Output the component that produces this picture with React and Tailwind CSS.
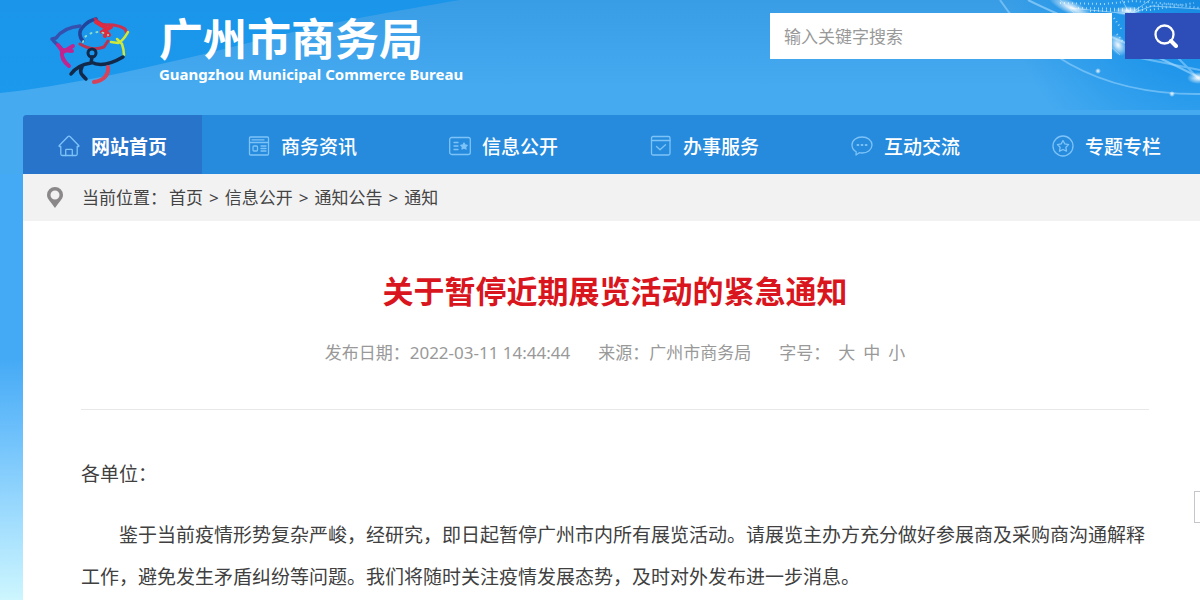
import React, { useState } from 'react';

const iconProps = {
    width: 22, height: 22, viewBox: '0 0 22 22', fill: 'none',
    stroke: 'currentColor', strokeWidth: 1.3, strokeLinecap: 'round', strokeLinejoin: 'round',
    'aria-hidden': true, className: 'shrink-0 text-[#7dc3f8]',
};

const HomeIcon = () => (
    <svg {...iconProps}>
        <path d="M2.800 11.500H1.600c-.6 0-.7-.6-.3-1L9.800 1.700a1.700 1.700 0 0 1 2.400 0l8.500 8.800c.4.4.3 1-.3 1h-1.200V19a1.500 1.500 0 0 1-1.500 1.500H4.300A1.500 1.500 0 0 1 2.800 19z" />
        <path d="M7.700 20.500v-5.300a.8.8 0 0 1 .8-.8h5a.8.8 0 0 1 .8.8v5.300" />
    </svg>
);

const NewsIcon = () => (
    <svg {...iconProps}>
        <rect x="1.500" y="2" width="19" height="18" rx="1" />
        <path d="M1.500 7.500h19M4 4.800h12M13 11h5M13 13.500h5M13 16h5" />
        <rect x="5" y="11" width="4.500" height="5" rx="1" />
    </svg>
);

const InfoIcon = () => (
    <svg {...iconProps}>
        <rect x="0.700" y="2.500" width="20.600" height="17" rx="2" />
        <path d="M5 7.500h4M5 11h4M5 14.500h4" />
        <path d="m15 8 1 2 2.200.3-1.600 1.500.4 2.200-2-1-2 1 .4-2.200-1.600-1.500 2.200-.3z" fill="currentColor" />
    </svg>
);

const ServiceIcon = () => (
    <svg {...iconProps}>
        <rect x="1.500" y="1.500" width="18.500" height="18.500" rx="1.500" />
        <path d="M1.500 5.500H20M6.500 11.500l3.500 3.300 5.500-5" />
    </svg>
);

const ChatIcon = () => (
    <svg {...iconProps}>
        <path d="M11 2c5.600 0 10 3.500 10 8s-4.400 8-10 8c-1 0-1.900-.1-2.700-.3L5 20l.2-3.300C2.600 15.300 1 12.800 1 10c0-4.500 4.400-8 10-8z" />
        <path d="M6.500 10h.8M10.600 10h.8M14.700 10h.8" strokeWidth="2" />
    </svg>
);

const StarIcon = () => (
    <svg {...iconProps}>
        <circle cx="11" cy="11" r="10" />
        <path d="m11 5.500 1.800 3.400 3.800.7-2.700 2.700.6 3.900-3.500-1.700-3.500 1.700.6-3.900-2.700-2.700 3.800-.7z" />
    </svg>
);

const navItems = [
    { label: '网站首页', icon: <HomeIcon />, active: true },
    { label: '商务资讯', icon: <NewsIcon /> },
    { label: '信息公开', icon: <InfoIcon /> },
    { label: '办事服务', icon: <ServiceIcon /> },
    { label: '互动交流', icon: <ChatIcon /> },
    { label: '专题专栏', icon: <StarIcon /> },
];

const crumbs = ['首页', '信息公开', '通知公告', '通知'];

// Kapok flower made of five linked figures
const Logo = () => (
    <svg width="84" height="68" viewBox="0 0 84 68" fill="none" strokeLinecap="round" strokeLinejoin="round" strokeWidth="3" aria-hidden="true">
        <path d="M34 25c-4-4-4-10-1-13 4-5 8-8 14-9" stroke="#20459b" strokeWidth="3.500" />
        <path d="M46 3c3 3 5 5 10 6" stroke="#b52d55" />
        <path d="M3 23l4-1c5-7 13-11 24-12M4 24c2 3 5 5 8 8" stroke="#3550ad" strokeWidth="3.500" />
        <path d="M54 9c9-1 16 0 22 4l2 4" stroke="#c93350" strokeWidth="3" />
        <path d="M47 6l10 6-1 8M53 16l9-5M56 14l4 5" stroke="#e02a3d" strokeWidth="4" />
        <path d="M79 16c-3 5-5 9-10 11l-7-1M68 23l5 5c1 3 2 7 2 11" stroke="#cfe83a" strokeWidth="2.500" />
        <path d="M34 26l2-5c5-5 15-7 23-2" stroke="#8fdcc8" strokeWidth="2" strokeDasharray="1 5" />
        <path d="M31 28c8 5 16 6 24 3l4-6" stroke="#bb3350" strokeWidth="3" />
        <path d="M9 29l5 7 10-6M14 34l9 1M13 35c-1 6 1 10 7 15" stroke="#c0258f" strokeWidth="4" />
        <circle cx="43" cy="37" r="4" stroke="#12294a" />
        <path d="M43 41l-1 6c-7 1-15 4-20 11M42 46c9 5 20 2 32-5M33 51c-3 5-1 7 4 12" stroke="#12294a" strokeWidth="3.500" />
        <path d="M59 51c1 7-4 14-14 15" stroke="#d4435b" strokeWidth="4" />
    </svg>
);

const HeaderBackdrop = () => (
    <svg className="absolute inset-0 w-full h-full" viewBox="0 0 1200 174" preserveAspectRatio="none" aria-hidden="true">
        <defs>
            <linearGradient id="sky" x1="0" y1="0" x2="0" y2="1">
                <stop offset="0" stopColor="#1a95e9" />
                <stop offset="1" stopColor="#1c9cf0" />
            </linearGradient>
            <linearGradient id="wave" x1="0" y1="0" x2="0" y2="1">
                <stop offset="0" stopColor="#389de5" />
                <stop offset="0.500" stopColor="#45aaf0" />
                <stop offset="1" stopColor="#45aaf0" />
            </linearGradient>
            <radialGradient id="glow">
                <stop offset="0" stopColor="#fff" stopOpacity="0.950" />
                <stop offset="1" stopColor="#fff" stopOpacity="0" />
            </radialGradient>
            <radialGradient id="globe" cx="1200" cy="-10" r="190" gradientUnits="userSpaceOnUse">
                <stop offset="0" stopColor="#1689e0" />
                <stop offset="0.400" stopColor="#1e95ea" />
                <stop offset="1" stopColor="#1e95ea" stopOpacity="0" />
            </radialGradient>
        </defs>
        <rect width="1200" height="174" fill="url(#sky)" />
        <path d="M0 93C60 87 150 68 240 45S390 12 460 0h740v174H0z" fill="url(#wave)" />
        <rect x="1000" width="200" height="110" fill="url(#globe)" />
        <g stroke="#a8dcff" fill="none">
            <path d="M1000 0c30 45 90 95 200 94" strokeWidth="2" opacity="0.500" />
            <path d="M1028 0c50 25 110 45 172 78" strokeWidth="2" opacity="0.600" />
            <path d="M1140 58l60 12M1165 45l35 35" strokeWidth="2" opacity="0.500" />
            <path d="M1060 0l60 55" opacity="0.500" />
            <path d="M1122 0l8 14 22-8 48 3M1150 0l-20 14-60-6" opacity="0.700" />
        </g>
        <g stroke="#d4f0ff" fill="none" strokeDasharray="1 3" strokeWidth="2" opacity="0.700">
            <path d="M1060 3l44 1 30-3 50 4M1078 8l50 1 40-5 32 4M1090 11l60-1 44-7" />
            <path d="M1114 18l8 12M1117 34l6 8" />
        </g>
        <ellipse cx="1072" cy="8" rx="26" ry="7" fill="url(#glow)" transform="rotate(25 1072 8)" />
        <ellipse cx="1128" cy="11" rx="14" ry="5" fill="url(#glow)" />
        <ellipse cx="1118" cy="45" rx="8" ry="12" fill="url(#glow)" transform="rotate(-30 1118 45)" />
        <ellipse cx="1198" cy="78" rx="11" ry="6" fill="url(#glow)" />
        <circle cx="1098" cy="71" r="3" fill="url(#glow)" />
        <circle cx="1172" cy="94" r="3" fill="url(#glow)" />
    </svg>
);

const Header = () => {
    const [keyword, setKeyword] = useState('');

    return (
        <header className="relative flex items-start justify-between pl-[49px] h-[115px]">
            <div className="flex gap-[26px] pt-4">
                <Logo />
                <div className="pt-[2px] text-white whitespace-nowrap">
                    <div className="text-[44px] leading-[46px] font-bold font-['Liberation_Sans','Noto_Sans_CJK_SC',sans-serif]">广州市商务局</div>
                    <div className="text-[15px] leading-5 font-bold">Guangzhou Municipal Commerce Bureau</div>
                </div>
            </div>
            <form className="flex gap-[13px] pt-[13px]" onSubmit={e => e.preventDefault()}>
                <input
                    type="text"
                    aria-label="输入关键字搜索"
                    placeholder="输入关键字搜索"
                    value={keyword}
                    onChange={e => setKeyword(e.target.value)}
                    className="w-[342px] h-[46px] px-[14px] bg-white text-[17px] text-[#444] placeholder:text-[#999] outline-none"
                />
                <button type="submit" aria-label="搜索" className="w-[75px] h-[46px] pl-[7px] flex items-center justify-center bg-[#2d4db8] text-white">
                    <svg width="24" height="24" viewBox="0 0 24 24" fill="none" stroke="currentColor" aria-hidden="true">
                        <circle cx="10.500" cy="10.500" r="9" strokeWidth="2.300" />
                        <path d="M17 17l5 5" strokeWidth="4" strokeLinecap="round" />
                    </svg>
                </button>
            </form>
        </header>
    );
};

const App = () => {
    const [fontSize, setFontSize] = useState('中');
    const bodySize = { '大': 'text-[22px]', '中': 'text-[19px]', '小': 'text-[16px]' }[fontSize];

    return (
        <div className="relative min-h-screen overflow-hidden bg-linear-to-b from-[#45aaf5] from-60% via-[#6cc0fb] via-72% to-[#cdf6fe] font-['Noto_Sans','Noto_Sans_CJK_SC',sans-serif]">
            <div className="absolute inset-x-0 top-0 h-[174px]">
                <HeaderBackdrop />
            </div>
            <Header />

            <div className="relative ml-[23px]">
                <nav className="flex overflow-hidden rounded-tl bg-[#278bdd]">
                    {navItems.map(item => (
                        <a
                            key={item.label}
                            href="#"
                            className={`flex items-center shrink-0 gap-[11px] h-[59px] pt-[6px] text-[19px] text-white ${item.active ? 'px-[35px] bg-[#2974cb] font-bold' : 'px-[46px] font-medium'}`}
                        >
                            <span className="pb-1">{item.icon}</span>
                            {item.label}
                        </a>
                    ))}
                </nav>

                <div className="flex items-center h-[47px] pl-6 gap-[19px] bg-[#f2f2f3] text-[17px] text-[#444]">
                    <svg width="16" height="21" viewBox="0 0 16 21" fill="none" aria-hidden="true">
                        <path fillRule="evenodd" fill="#8b8889" d="M8 0a8 8 0 0 1 8 8c0 4-4 7-8 13C4 15 0 12 0 8a8 8 0 0 1 8-8zm0 3.500a4.500 4.500 0 1 0 0 9 4.500 4.500 0 0 0 0-9z" />
                    </svg>
                    <div className="flex items-center gap-[2px]">
                        <span>当前位置：</span>
                        <ol className="flex gap-[6px]">
                            {crumbs.map((crumb, i) => (
                                <li key={crumb} className="flex gap-[6px]">
                                    {i > 0 && <span>&gt;</span>}
                                    <a href="#">{crumb}</a>
                                </li>
                            ))}
                        </ol>
                    </div>
                </div>

                <main className="min-h-[379px] bg-white pl-[58px] pr-[51px] pt-[47px]">
                    <h1 className="text-center text-[31px] leading-[46px] font-bold text-[#d9161d]">关于暂停近期展览活动的紧急通知</h1>
                    <div className="flex justify-center gap-7 mt-[27px] pb-11 border-b border-[#e8e8e8] text-[17px] leading-6 text-[#999]">
                        <span>发布日期：2022-03-11 14:44:44</span>
                        <span>来源：广州市商务局</span>
                        <div className="flex gap-2">
                            <span>字号：</span>
                            {['大', '中', '小'].map(size => (
                                <button key={size} type="button" onClick={() => setFontSize(size)}>{size}</button>
                            ))}
                        </div>
                    </div>
                    <article className={`pt-[43px] leading-[42px] text-[#404040] ${bodySize}`}>
                        <p>各单位：</p>
                        <p className="mt-[19px] indent-[2em]">
                            鉴于当前疫情形势复杂严峻，经研究，即日起暂停广州市内所有展览活动。请展览主办方充分做好参展商及采购商沟通解释工作，避免发生矛盾纠纷等问题。我们将随时关注疫情发展态势，及时对外发布进一步消息。
                        </p>
                    </article>
                </main>
            </div>

            {/* edge of the floating side panel */}
            <div className="absolute -right-1 top-[491px] w-[10px] h-[32px] border border-[#c4c6cc] bg-white" />
        </div>
    );
};

export default App;
